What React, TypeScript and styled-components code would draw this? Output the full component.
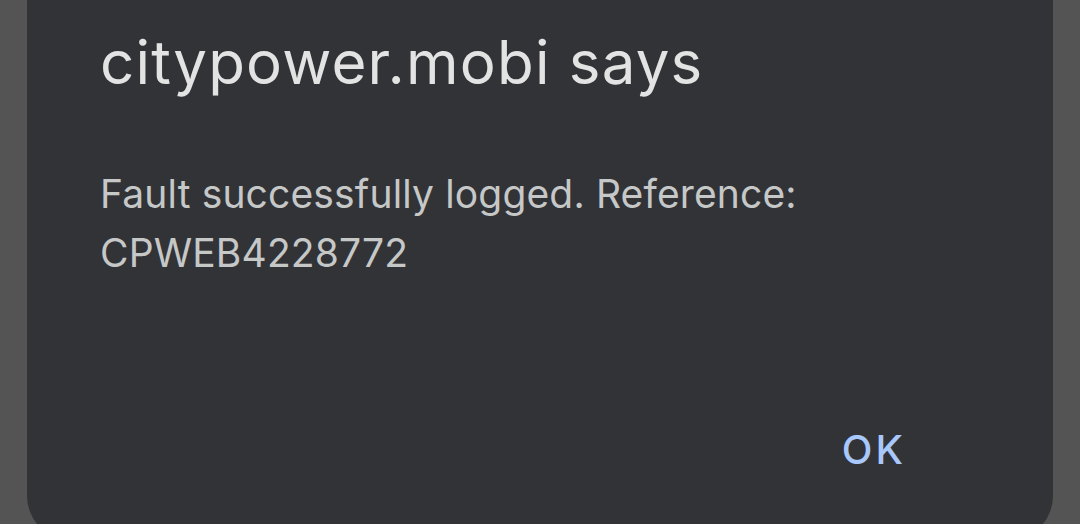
import styled, { createGlobalStyle } from "styled-components";

const GlobalStyle = createGlobalStyle`
  html, body {
    margin: 0;
    padding: 0;
    background: #545454;
    overflow: hidden;
  }
`;

const Backdrop = styled.div`
  width: 1080px;
  height: 524px;
  background: #545454;
  overflow: hidden;
  font-family: "Inter", "Open Sans", sans-serif;
`;

const Dialog = styled.div`
  margin: -40px 0 0 27px;
  width: 1026px;
  height: 580px;
  box-sizing: border-box;
  background: #323337;
  border-radius: 44px;
  padding: 62px 73px 0;
  display: flex;
  flex-direction: column;
`;

const Title = styled.h1`
  margin: 0;
  font-size: 60px;
  font-weight: 400;
  line-height: 80px;
  color: #e3e3e3;
  letter-spacing: 1.2px;
  white-space: nowrap;
`;

const Message = styled.p`
  margin: 62px 0 0;
  font-size: 39px;
  font-weight: 400;
  line-height: 59px;
  color: #c6c8c8;
  letter-spacing: 0.15px;
  white-space: nowrap;
`;

const Actions = styled.div`
  display: flex;
  justify-content: flex-end;
  margin-top: 144px;
  padding-right: 74px;
`;

const TextButton = styled.button`
  background: none;
  border: none;
  padding: 0;
  font-family: inherit;
  font-size: 40px;
  line-height: 48px;
  font-weight: 500;
  letter-spacing: 3px;
  color: #a8c7fa;
  cursor: pointer;
`;

export default function App() {
  return (
    <>
      <GlobalStyle />
      <Backdrop>
        <Dialog>
          <Title>citypower.mobi says</Title>
          <Message>
            Fault successfully logged. Reference:
            <br />
            CPWEB4228772
          </Message>
          <Actions>
            <TextButton>OK</TextButton>
          </Actions>
        </Dialog>
      </Backdrop>
    </>
  );
}
